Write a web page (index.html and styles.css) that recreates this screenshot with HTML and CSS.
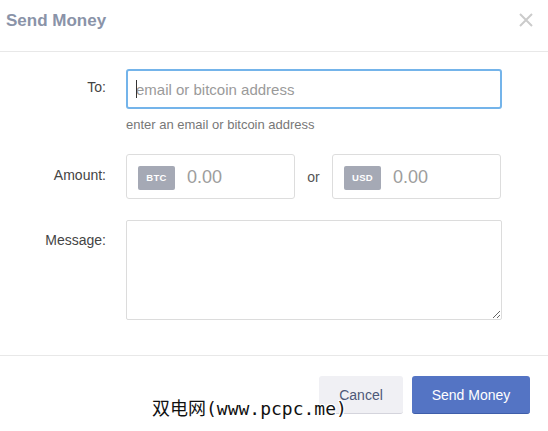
FILE: index.html
```html
<!DOCTYPE html>
<html>
<head>
<meta charset="utf-8">
<link rel="stylesheet" href="styles.css">
</head>
<body>
<div class="dialog">
  <header class="head">
    <h1 class="title">Send Money</h1>
    <span class="close" aria-label="close">
      <svg width="14" height="14" viewBox="0 0 14 14"><path d="M1 1 L13 13 M13 1 L1 13" stroke="#cbcbcb" stroke-width="2" fill="none"/></svg>
    </span>
  </header>
  <div class="form">
    <div class="row row-to">
      <label class="label">To:</label>
      <div class="field">
        <div class="input-wrap">
          <input class="input" type="text" placeholder="email or bitcoin address">
          <span class="caret"></span>
        </div>
        <div class="help">enter an email or bitcoin address</div>
      </div>
    </div>
    <div class="row row-amount">
      <label class="label">Amount:</label>
      <div class="field amounts">
        <div class="amount-box"><span class="badge">BTC</span><span class="amount">0.00</span></div>
        <span class="or">or</span>
        <div class="amount-box"><span class="badge">USD</span><span class="amount">0.00</span></div>
      </div>
    </div>
    <div class="row row-msg">
      <label class="label">Message:</label>
      <div class="field"><textarea class="textarea"></textarea></div>
    </div>
  </div>
  <footer class="foot">
    <button class="btn btn-cancel">Cancel</button>
    <button class="btn btn-send">Send Money</button>
  </footer>
  <div class="watermark">双电网(www.pcpc.me)</div>
</div>
</body>
</html>
```
FILE: styles.css
```css
html, body {
  margin: 0;
  padding: 0;
  background: #fff;
}
body {
  font-family: "Liberation Sans", Arial, sans-serif;
  width: 548px;
  height: 431px;
  overflow: hidden;
}
.dialog {
  position: relative;
  width: 548px;
  height: 431px;
}
.head {
  border-bottom: 1px solid #e8e8e8;
  display: flex;
  align-items: flex-start;
  justify-content: space-between;
  box-sizing: border-box;
  height: 52px;
}
.title {
  margin: 0;
  padding: 11px 0 0 6px;
  font-size: 17px;
  line-height: 20px;
  font-weight: bold;
  color: #8a93a8;
}
.close {
  display: block;
  margin: 13px 15px 0 0;
  width: 14px;
  height: 14px;
}
.close svg { display: block; }
.form {
  padding-top: 17px;
}
.row {
  display: grid;
  grid-template-columns: 106px 376px;
  column-gap: 20px;
}
.label {
  text-align: right;
  font-size: 14px;
  line-height: 20px;
  color: #444;
}
.row-to .label { padding-top: 8px; }
.row-amount { margin-top: 22px; }
.row-amount .label { padding-top: 11px; }
.row-msg { margin-top: 21px; }
.row-msg .label { padding-top: 10px; }
.input-wrap {
  position: relative;
}
.input {
  display: block;
  box-sizing: border-box;
  width: 376px;
  height: 40px;
  border: 2px solid #74b4ea;
  border-radius: 3px;
  padding: 0 8px;
  font-family: "Liberation Sans", Arial, sans-serif;
  font-size: 15px;
  outline: none;
  color: #333;
}
.input::placeholder { color: #9a9a9a; }
.caret {
  position: absolute;
  left: 10px;
  top: 11px;
  width: 1px;
  height: 18px;
  background: #333;
}
.help {
  margin-top: 8px;
  font-size: 13px;
  line-height: 15px;
  color: #777;
}
.amounts {
  display: flex;
  align-items: center;
}
.amount-box {
  box-sizing: border-box;
  width: 169px;
  height: 45px;
  border: 1px solid #ddd;
  border-radius: 3px;
  display: flex;
  align-items: center;
  padding-left: 11px;
  padding-top: 2px;
}
.badge {
  width: 37px;
  height: 24px;
  background: #a5a9b5;
  border-radius: 2px;
  color: #fff;
  font-size: 9.5px;
  font-weight: bold;
  display: flex;
  align-items: center;
  justify-content: center;
  letter-spacing: 0.3px;
}
.amount {
  margin-left: 12px;
  font-size: 18px;
  color: #9d9d9d;
}
.or {
  width: 37px;
  text-align: center;
  font-size: 14px;
  color: #555;
}
.textarea {
  display: block;
  box-sizing: border-box;
  width: 376px;
  height: 100px;
  border: 1px solid #dcdcdc;
  border-radius: 2px;
  margin: 0;
  resize: both;
  font-family: "Liberation Sans", Arial, sans-serif;
}
.foot {
  margin-top: 35px;
  border-top: 1px solid #e8e8e8;
  display: flex;
  justify-content: flex-end;
  gap: 9px;
  padding: 20px 18px 0 0;
}
.btn {
  height: 38px;
  border: none;
  border-radius: 3px;
  font-family: "Liberation Sans", Arial, sans-serif;
  font-size: 14px;
  padding: 0;
}
.btn-cancel {
  width: 84px;
  background: #f0f0f4;
  border-bottom: 1px solid #d4d4dc;
  color: #4d5878;
}
.btn-send {
  width: 118px;
  background: #5474c4;
  border-bottom: 1px solid #3f5eaa;
  color: #fff;
}
.watermark {
  position: absolute;
  left: 152px;
  top: 397px;
  font-family: "DejaVu Sans Mono", "Noto Sans CJK SC", monospace;
  font-size: 18px;
  line-height: 24px;
  color: #111;
  text-shadow: 1px 0 #fff, -1px 0 #fff, 0 1px #fff, 0 -1px #fff, 1px 1px #fff, -1px -1px #fff, 1px -1px #fff, -1px 1px #fff;
  white-space: nowrap;
}
```
